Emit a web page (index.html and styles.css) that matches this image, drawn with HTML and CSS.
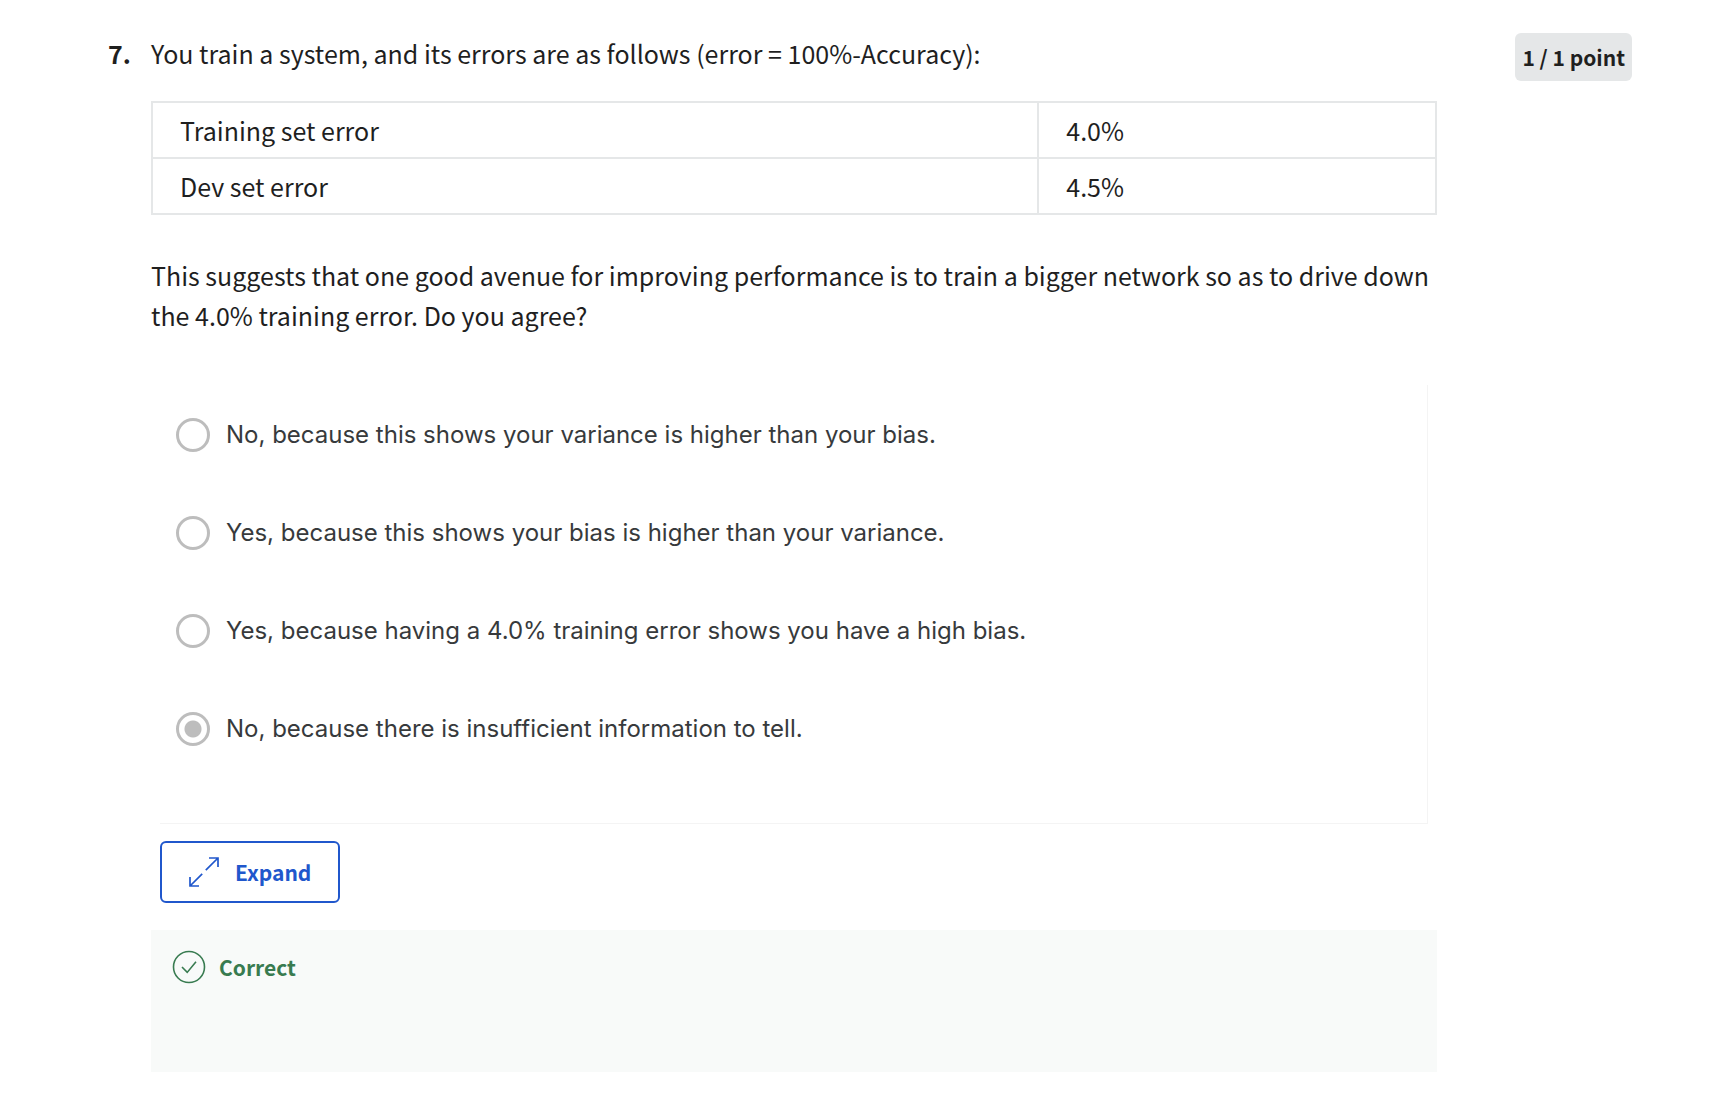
FILE: index.html
```html
<!DOCTYPE html>
<html lang="en">
<head>
<meta charset="utf-8">
<meta name="viewport" content="width=device-width, initial-scale=1">
<title>Quiz question 7</title>
<link rel="stylesheet" href="styles.css">
</head>
<body>
<main class="question">
  <div class="number">7.</div>
  <div class="body">
    <p class="prompt">You train a system, and its errors are as follows (error = 100%-Accuracy):</p>
    <table class="errors">
      <tbody>
        <tr><td class="name">Training set error</td><td>4.0%</td></tr>
        <tr><td class="name">Dev set error</td><td>4.5%</td></tr>
      </tbody>
    </table>
    <p class="prompt">This suggests that one good avenue for improving performance is to train a bigger network so as to drive down the 4.0% training error. Do you agree?</p>
    <form class="options">
      <label class="option"><input class="radio" type="radio" name="answer"><span>No, because this shows your variance is higher than your bias.</span></label>
      <label class="option"><input class="radio" type="radio" name="answer"><span>Yes, because this shows your bias is higher than your variance.</span></label>
      <label class="option"><input class="radio" type="radio" name="answer"><span>Yes, because having a 4.0% training error shows you have a high bias.</span></label>
      <label class="option"><input class="radio" type="radio" name="answer" checked><span>No, because there is insufficient information to tell.</span></label>
    </form>
    <button class="expand" type="button">
      <svg width="30" height="30" viewBox="0 0 30 30" fill="none" stroke="currentColor" stroke-width="1.7" aria-hidden="true">
        <path d="M20 1h9v9M29 1 16.800 13.200M10 29H1v-9M1 29l12.200-12.200"/>
      </svg>
      <span>Expand</span>
    </button>
    <section class="feedback">
      <svg width="34" height="34" viewBox="0 0 34 34" fill="none" stroke="currentColor" aria-hidden="true">
        <circle cx="17" cy="17" r="15.5" stroke-width="1.6"/>
        <path d="M10 17l5.2 5.4L24 11.800" stroke-width="1.6"/>
      </svg>
      <span>Correct</span>
    </section>
  </div>
  <div class="points">1 / 1 point</div>
</main>
</body>
</html>
```
FILE: styles.css
```css
* {
  box-sizing: border-box;
}

body {
  margin: 0;
  background: #fff;
  color: #1f1f1f;
  font-family: "Noto Sans CJK SC", "Noto Sans", sans-serif;
  font-size: 25px;
  line-height: 40px;
}

.question {
  display: grid;
  grid-template-columns: 43px 1fr auto;
  align-items: start;
  padding: 33px 96px 38px 108px;
}

.number {
  font-weight: 700;
}

.prompt {
  margin: 0;
}

.errors {
  width: 100%;
  margin: 28px 0 40px;
  border-collapse: collapse;
  table-layout: fixed;
}

.errors td {
  height: 56px;
  padding: 0 27px;
  border: 2px solid #e5e7e8;
}

.errors .name {
  width: 69%;
}

.options {
  display: grid;
  gap: 58px;
  margin: 50px 9px 17px;
  padding: 30px 16px 74px;
  border-right: 1px solid #f4f4f4;
  border-bottom: 1px solid #f4f4f4;
}

.option {
  display: flex;
  align-items: center;
  gap: 16px;
  color: #373a3c;
  font-family: Inter, sans-serif;
  font-size: 24px;
}

.radio {
  appearance: none;
  flex: none;
  width: 34px;
  height: 34px;
  margin: 0;
  border: 3px solid #bdbdbd;
  border-radius: 50%;
}

.radio:checked {
  background: radial-gradient(circle, #bdbdbd 8px, transparent 9px);
}

.expand {
  display: flex;
  align-items: center;
  gap: 16px;
  height: 62px;
  margin: 0 9px 27px;
  padding: 0 27px;
  border: 2px solid #2057cc;
  border-radius: 6px;
  background: #fff;
  color: #2057cc;
  font: inherit;
  font-size: 21px;
  font-weight: 700;
}

.feedback {
  display: flex;
  align-items: flex-start;
  gap: 13px;
  min-height: 142px;
  padding: 20px 21px;
  background: #f8faf9;
  color: #387b50;
  font-size: 21px;
  font-weight: 700;
  line-height: 34px;
}

.points {
  margin-left: 78px;
  padding: 4px 7px;
  border-radius: 6px;
  background: #e5e7e8;
  font-size: 21px;
  font-weight: 700;
}
```
